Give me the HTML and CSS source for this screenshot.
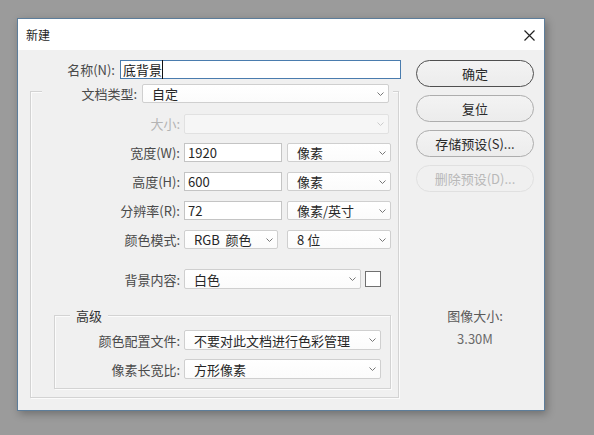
FILE: index.html
```html
<!DOCTYPE html>
<html lang="zh-CN">
<head>
<meta charset="utf-8">
<title>新建</title>
<link rel="stylesheet" href="styles.css">
</head>
<body>
<div class="dialog">
  <div class="titlebar">
    <span class="title">新建</span>
    <svg class="close" width="11" height="11" viewBox="0 0 11 11"><path d="M0.5 0.5 L10.5 10.5 M10.5 0.5 L0.5 10.5" stroke="#222" stroke-width="1.2" fill="none"/></svg>
  </div>
  <div class="content">
    <div class="left">
      <div class="name-row">
        <label class="name-lbl">名称(N):</label>
        <div class="name-input"><span class="caret">底背景</span></div>
      </div>
      <div class="group">
        <div class="group-head">
          <span class="head-lbl">文档类型:</span>
          <div class="select sel-preset"><span>自定</span><svg class="chev" width="7" height="4" viewBox="0 0 7 4"><polyline points="0.5,0.5 3.5,3.5 6.5,0.5" fill="none" stroke="#777" stroke-width="1"/></svg></div>
        </div>
        <div class="row r-size">
          <span class="lbl disabled">大小:</span>
          <div class="select sel-size disabled-sel"><span></span><svg class="chev" width="7" height="4" viewBox="0 0 7 4"><polyline points="0.5,0.5 3.5,3.5 6.5,0.5" fill="none" stroke="#ccc" stroke-width="1"/></svg></div>
        </div>
        <div class="row r-dim">
          <span class="lbl">宽度(W):</span>
          <div class="input">1920</div>
          <div class="select sel-unit"><span>像素</span><svg class="chev" width="7" height="4" viewBox="0 0 7 4"><polyline points="0.5,0.5 3.5,3.5 6.5,0.5" fill="none" stroke="#777" stroke-width="1"/></svg></div>
        </div>
        <div class="row r-dim">
          <span class="lbl">高度(H):</span>
          <div class="input">600</div>
          <div class="select sel-unit"><span>像素</span><svg class="chev" width="7" height="4" viewBox="0 0 7 4"><polyline points="0.5,0.5 3.5,3.5 6.5,0.5" fill="none" stroke="#777" stroke-width="1"/></svg></div>
        </div>
        <div class="row r-dim">
          <span class="lbl">分辨率(R):</span>
          <div class="input">72</div>
          <div class="select sel-unit"><span>像素/英寸</span><svg class="chev" width="7" height="4" viewBox="0 0 7 4"><polyline points="0.5,0.5 3.5,3.5 6.5,0.5" fill="none" stroke="#777" stroke-width="1"/></svg></div>
        </div>
        <div class="row r-dim">
          <span class="lbl">颜色模式:</span>
          <div class="select sel-mode"><span>RGB&nbsp; 颜色</span><svg class="chev" width="7" height="4" viewBox="0 0 7 4"><polyline points="0.5,0.5 3.5,3.5 6.5,0.5" fill="none" stroke="#777" stroke-width="1"/></svg></div>
          <div class="select sel-unit"><span>8 位</span><svg class="chev" width="7" height="4" viewBox="0 0 7 4"><polyline points="0.5,0.5 3.5,3.5 6.5,0.5" fill="none" stroke="#777" stroke-width="1"/></svg></div>
        </div>
        <div class="row r-bg">
          <span class="lbl">背景内容:</span>
          <div class="select sel-bg"><span>白色</span><svg class="chev" width="7" height="4" viewBox="0 0 7 4"><polyline points="0.5,0.5 3.5,3.5 6.5,0.5" fill="none" stroke="#777" stroke-width="1"/></svg></div>
          <div class="swatch"></div>
        </div>
        <div class="adv">
          <div class="adv-legend">高级</div>
          <div class="row r-adv1">
            <span class="lbl adv-lbl">颜色配置文件:</span>
            <div class="select sel-adv"><span>不要对此文档进行色彩管理</span><svg class="chev" width="7" height="4" viewBox="0 0 7 4"><polyline points="0.5,0.5 3.5,3.5 6.5,0.5" fill="none" stroke="#777" stroke-width="1"/></svg></div>
          </div>
          <div class="row r-adv2">
            <span class="lbl adv-lbl">像素长宽比:</span>
            <div class="select sel-adv"><span>方形像素</span><svg class="chev" width="7" height="4" viewBox="0 0 7 4"><polyline points="0.5,0.5 3.5,3.5 6.5,0.5" fill="none" stroke="#777" stroke-width="1"/></svg></div>
          </div>
        </div>
      </div>
    </div>
    <div class="right">
      <button class="btn btn-default">确定</button>
      <button class="btn">复位</button>
      <button class="btn">存储预设(S)...</button>
      <button class="btn btn-disabled">删除预设(D)...</button>
      <div class="imgsize">
        <div class="imgsize-lbl">图像大小:</div>
        <div class="imgsize-val">3.30M</div>
      </div>
    </div>
  </div>
</div>
</body>
</html>
```
FILE: styles.css
```css
html, body {
  margin: 0;
  padding: 0;
}
body {
  background: #9b9b9b;
  width: 594px;
  height: 435px;
  overflow: hidden;
  font-family: "Noto Sans CJK SC", "Microsoft YaHei", sans-serif;
  font-size: 13px;
  color: #333;
}
.dialog {
  margin: 18px 0 0 17px;
  width: 528px;
  height: 393px;
  box-sizing: border-box;
  border: 1px solid #5d7d9a;
  background: #f0f0f0;
  box-shadow: 2px 3px 8px rgba(0, 0, 0, 0.28);
  display: flex;
  flex-direction: column;
}
.titlebar {
  height: 31px;
  flex: none;
  background: #fff;
  display: flex;
  align-items: center;
  justify-content: space-between;
  padding: 0 9px 0 8px;
}
.title {
  font-size: 12px;
  color: #262626;
  line-height: 16px;
}
.close {
  display: block;
  margin-top: 1px;
}
.content {
  flex: 1;
  display: flex;
}
.left {
  width: 386px;
  padding: 10px 0 0 12px;
  box-sizing: border-box;
}
.name-row {
  display: flex;
  align-items: center;
  height: 19px;
}
.name-lbl {
  width: 85px;
  margin-right: 5px;
  text-align: right;
  line-height: 19px;
  color: #4a4a4a;
}
.name-input {
  width: 281px;
  height: 19px;
  box-sizing: border-box;
  border: 1px solid #4a7cae;
  background: #fff;
  padding-left: 2px;
  line-height: 17px;
  color: #1a1a1a;
}
.caret {
  border-right: 1px solid #111;
}
.group {
  margin-top: 12px;
  width: 369px;
  height: 307px;
  box-sizing: border-box;
  border: 1px solid #d3d3d3;
  box-shadow: inset 1px 1px 0 #fbfbfb, 1px 1px 0 #fbfbfb;
}
.group-head {
  margin: -8px 0 0 11px;
  width: 351px;
  height: 19px;
  background: #f0f0f0;
  display: flex;
  align-items: center;
}
.head-lbl {
  width: 95px;
  margin-right: 5px;
  text-align: right;
  line-height: 19px;
  color: #4a4a4a;
}
.select {
  height: 19px;
  box-sizing: border-box;
  border: 1px solid #cfcfcf;
  border-radius: 2px;
  background: linear-gradient(#ffffff, #fbfbfb);
  display: flex;
  align-items: center;
  justify-content: space-between;
  padding: 0 4px 0 9px;
  line-height: 17px;
  color: #262626;
}
.chev {
  display: block;
  flex: none;
}
.sel-preset {
  width: 247px;
}
.row {
  display: flex;
  align-items: center;
  height: 19px;
}
.lbl {
  width: 149px;
  margin-right: 4px;
  text-align: right;
  line-height: 19px;
  color: #4a4a4a;
}
.lbl.disabled {
  color: #b4b4b4;
}
.r-size {
  margin-top: 11px;
}
.sel-size {
  width: 205px;
  height: 20px;
}
.disabled-sel {
  background: #f6f6f6;
  border-color: #e1e1e1;
}
.r-dim {
  margin-top: 10px;
}
.input {
  width: 98px;
  height: 19px;
  box-sizing: border-box;
  border: 1px solid #c4c4c4;
  background: #fff;
  padding-left: 3px;
  line-height: 17px;
  color: #262626;
}
.sel-unit {
  width: 104px;
  margin-left: 5px;
}
.sel-mode {
  width: 94px;
  margin-right: 4px;
}
.r-bg {
  margin-top: 20px;
  height: 20px;
}
.sel-bg {
  width: 177px;
  height: 20px;
}
.swatch {
  width: 16px;
  height: 16px;
  box-sizing: border-box;
  margin-left: 4px;
  border: 1px solid #707070;
  background: #fff;
}
.adv {
  margin: 26px 0 0 23px;
  width: 337px;
  height: 74px;
  box-sizing: border-box;
  border: 1px solid #d3d3d3;
  box-shadow: inset 1px 1px 0 #fbfbfb, 1px 1px 0 #fbfbfb;
}
.adv-legend {
  margin: -9px 0 0 15px;
  width: fit-content;
  padding: 0 6px;
  background: #f0f0f0;
  line-height: 18px;
  color: #333;
}
.adv-lbl {
  width: 125px;
}
.r-adv1 {
  margin-top: 5px;
  height: 20px;
}
.r-adv2 {
  margin-top: 9px;
  height: 20px;
}
.sel-adv {
  width: 197px;
  height: 20px;
}
.right {
  width: 118px;
  margin-left: 12px;
  padding-top: 10px;
  display: flex;
  flex-direction: column;
}
.btn {
  width: 118px;
  height: 27px;
  margin: 0 0 8px 0;
  padding: 0;
  border: 1px solid #adadad;
  border-radius: 14px;
  background: linear-gradient(#f3f3f3, #ececec);
  font-family: "Noto Sans CJK SC", "Microsoft YaHei", sans-serif;
  font-size: 13px;
  color: #2a2a2a;
  line-height: 25px;
  text-align: center;
}
.btn-default {
  border-color: #4f4f4f;
}
.btn-disabled {
  border-color: #e0e0e0;
  background: #f0f0f0;
  color: #b8b8b8;
}
.imgsize {
  margin-top: 107px;
  text-align: center;
  color: #5a5a5a;
}
.imgsize-lbl {
  line-height: 18px;
}
.imgsize-val {
  margin-top: 5px;
  line-height: 18px;
  color: #6a6a6a;
}
```
